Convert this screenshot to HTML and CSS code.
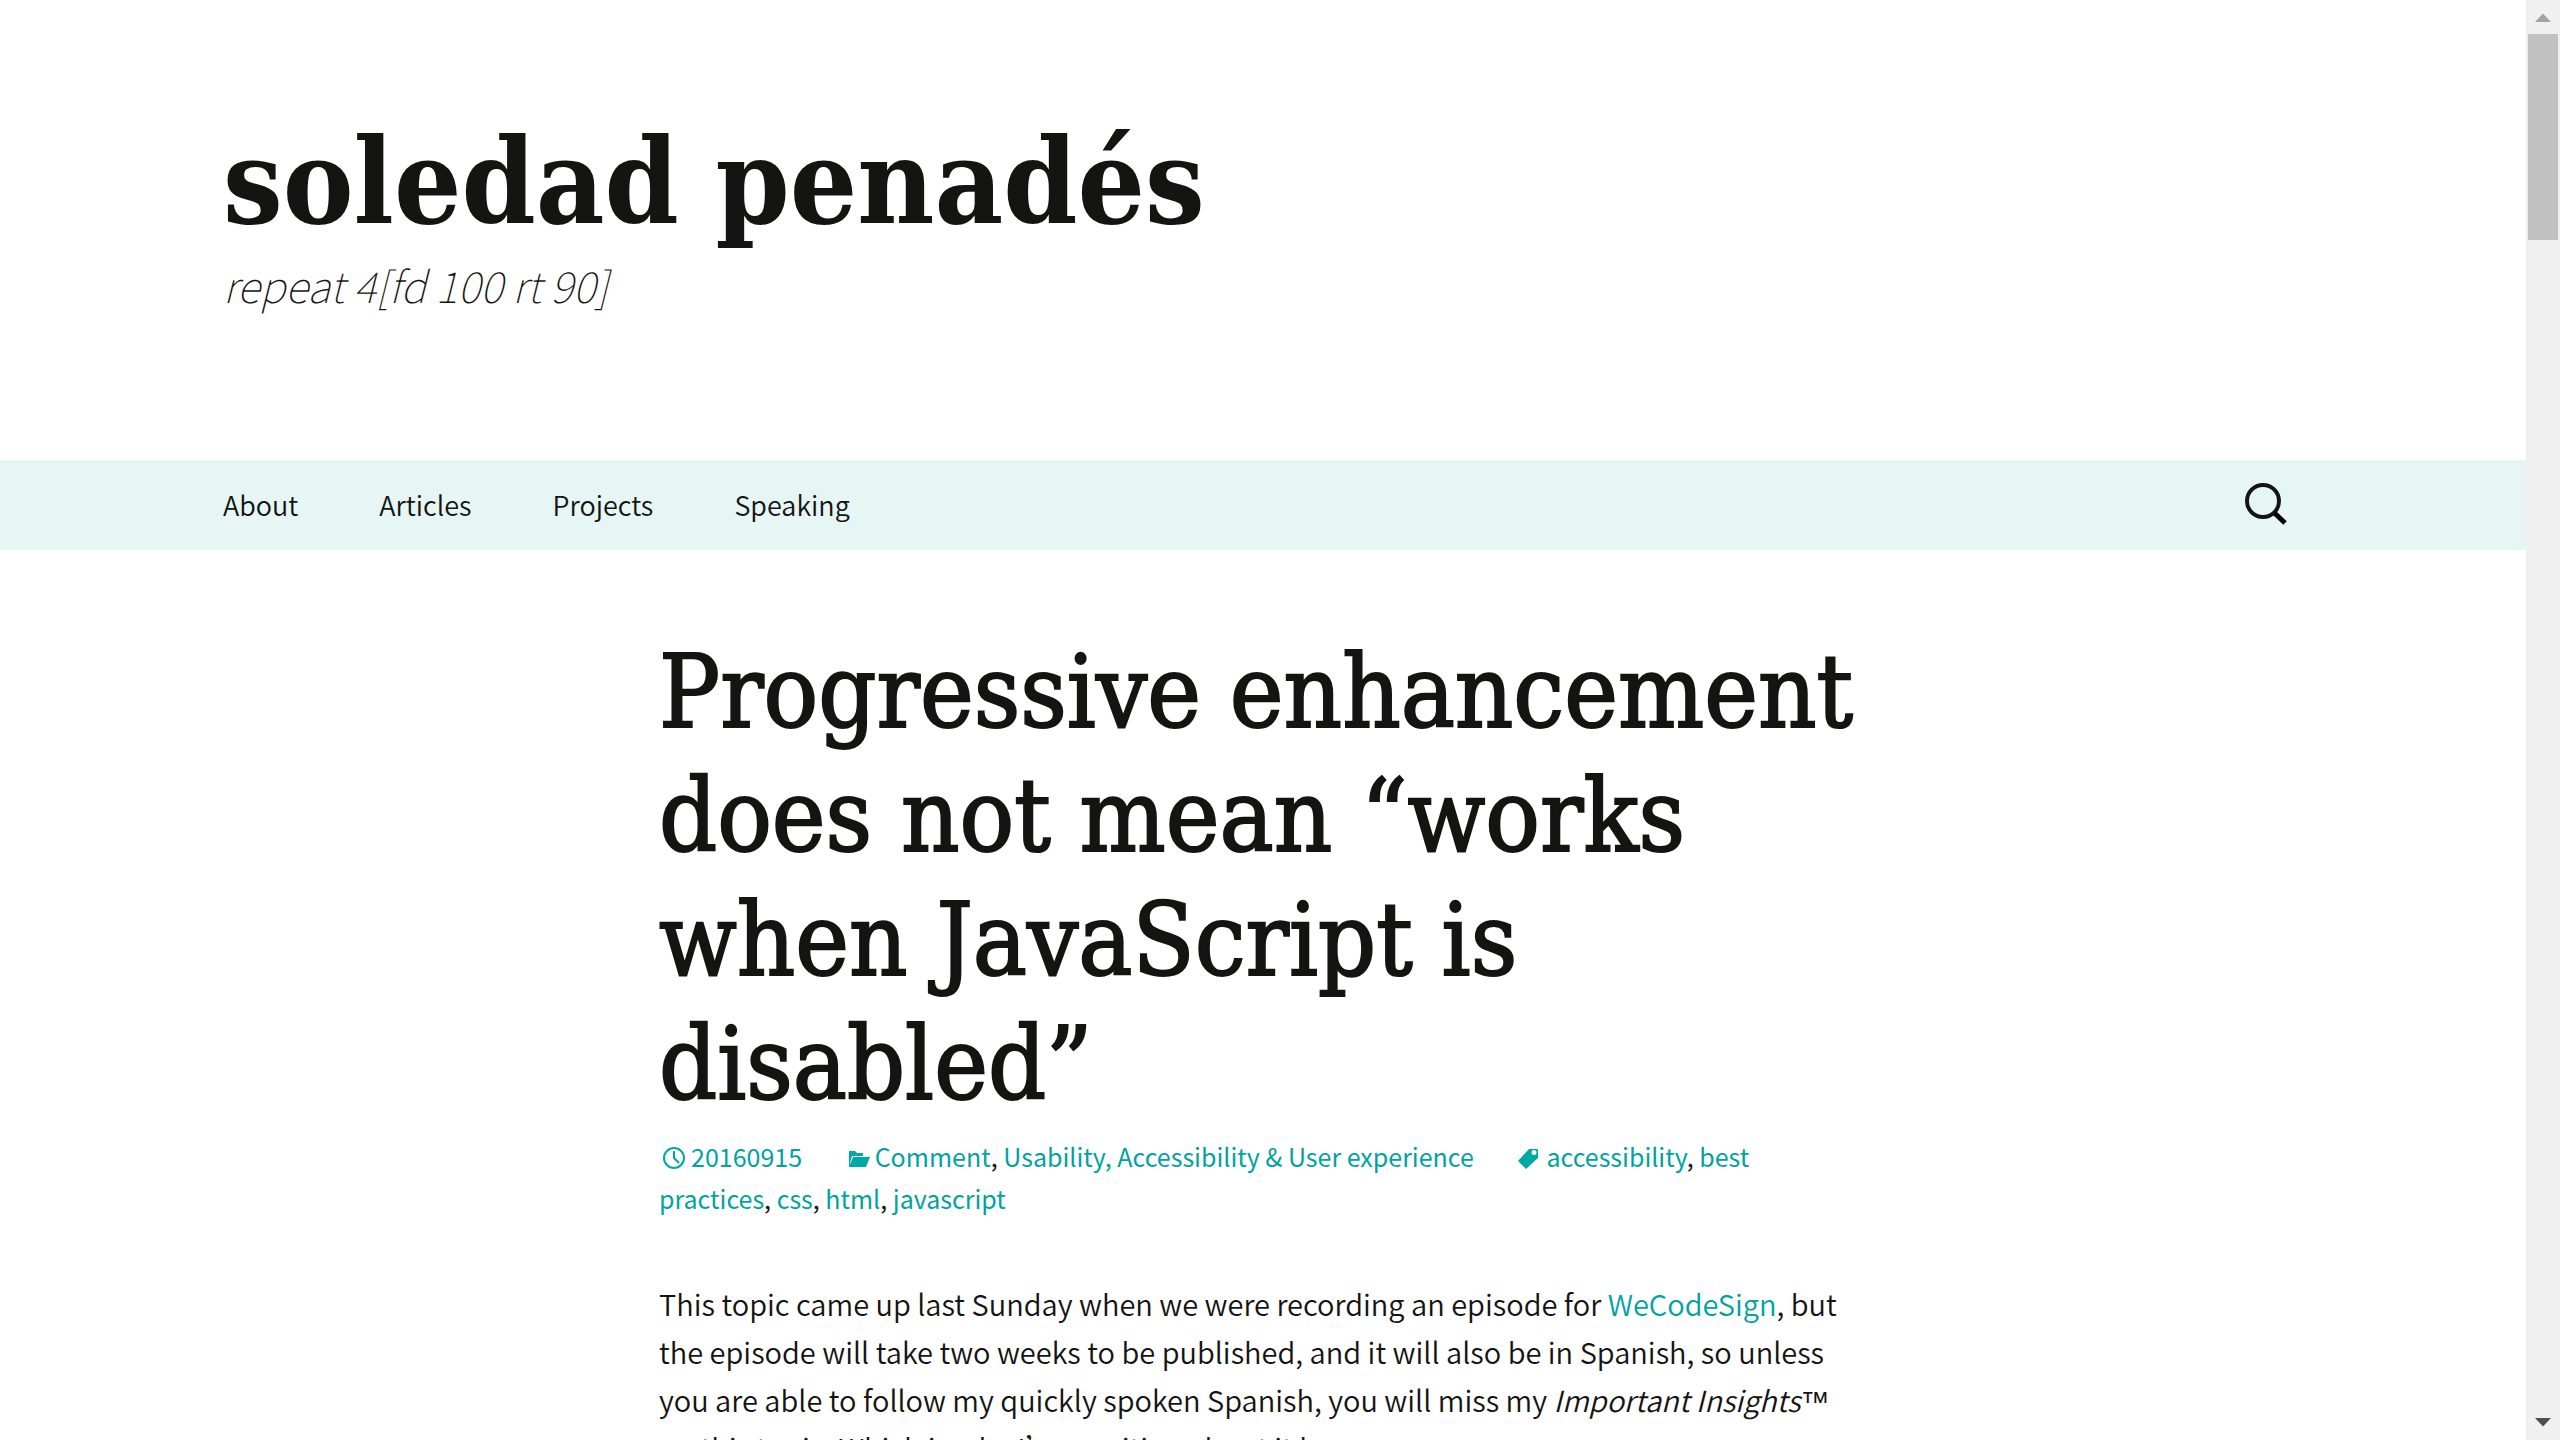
FILE: index.html
```html
<!DOCTYPE html>
<html lang="en">
<head>
<meta charset="utf-8">
<title>Progressive enhancement does not mean “works when JavaScript is disabled” | soledad penadés</title>
<link rel="stylesheet" href="styles.css">
</head>
<body>
<div class="viewport">
  <div class="page">
    <header class="site-header">
      <a class="home-link" href="#">
        <h1 class="site-title">soledad penadés</h1>
        <p class="site-description">repeat 4[fd 100 rt 90]</p>
      </a>
    </header>
    <div class="navbar">
      <nav class="main-nav">
        <ul class="menu">
          <li><a href="#">About</a></li>
          <li><a href="#">Articles</a></li>
          <li><a href="#">Projects</a></li>
          <li><a href="#">Speaking</a></li>
        </ul>
        <button class="search-toggle" type="button" aria-label="Search">
          <svg width="46" height="46" viewBox="0 0 46 46" aria-hidden="true"><circle cx="20" cy="20" r="16" fill="none" stroke="#141412" stroke-width="4"/><path d="M31.500 32 42 42" stroke="#000" stroke-width="5"/></svg>
        </button>
      </nav>
    </div>
    <main class="entry">
      <h2 class="entry-title">Progressive enhancement does not mean “works when JavaScript is disabled”</h2>
      <div class="entry-meta">
        <span class="meta-item"><svg class="meta-icon" viewBox="0 0 32 24" aria-hidden="true"><circle cx="15" cy="12" r="10" fill="none" stroke="currentColor" stroke-width="2"/><path d="M15 5v7l5 5" fill="none" stroke="currentColor" stroke-width="2"/></svg><a href="#">20160915</a></span>
        <span class="meta-item"><svg class="meta-icon" viewBox="0 0 32 24" aria-hidden="true"><path fill="currentColor" d="M6 5h6l2 2h6v3H9L7 17V20H6zM10 11H27L23 21H6z"/></svg><a href="#">Comment</a>, <a href="#">Usability, Accessibility &amp; User experience</a></span>
        <span class="meta-item"><svg class="meta-icon" viewBox="0 0 32 24" aria-hidden="true"><path fill="currentColor" fill-rule="evenodd" d="M15 3h8l1 1v8L12 23 4 15zM20 4a2.500 2.500 0 1 0 0 5a2.500 2.500 0 0 0 0-5z"/></svg><a href="#">accessibility</a>, <a href="#">best practices</a>, <a href="#">css</a>, <a href="#">html</a>, <a href="#">javascript</a></span>
      </div>
      <p class="entry-text">This topic came up last Sunday when we were recording an episode for <a href="#">WeCodeSign</a>, but the episode will take two weeks to be published, and it will also be in Spanish, so unless you are able to follow my quickly spoken Spanish, you will miss my <em>Important Insights</em><span class="tm">™</span> on this topic. Which is why I’m writing about it here.</p>
    </main>
  </div>
  <div class="scrollbar" aria-hidden="true">
    <svg class="arrow" viewBox="0 0 34 34"><path d="M9 22 17 13.500 25 22z" fill="#a3a3a3"/></svg>
    <div class="thumb"></div>
    <svg class="arrow arrow-down" viewBox="0 0 34 34"><path d="M9 12 17 20.500 25 12z" fill="#505050"/></svg>
  </div>
</div>
</body>
</html>
```
FILE: styles.css
```css
* { box-sizing: border-box; }
body {
  margin: 0;
  background: #fff;
  color: #141412;
  font-family: "Noto Sans CJK SC", "Noto Sans", sans-serif;
  font-size: 29px;
  font-weight: 350;
  line-height: 48px;
}
a { color: #00a3a0; text-decoration: none; }
h1, h2, p, ul { margin: 0; padding: 0; }

.viewport {
  display: grid;
  grid-template-columns: 1fr 34px;
  grid-template-rows: 100%;
  height: 100vh;
  overflow: hidden;
}
.page { min-width: 0; }

.site-header, .main-nav {
  max-width: 2160px;
  margin: 0 auto;
  padding: 0 40px;
}
.site-header { height: 460px; }
.home-link { display: block; padding-top: 114px; color: #141412; }
.site-title {
  font: bold 118px/136px "DejaVu Serif Condensed", "DejaVu Serif", serif;
}
.site-description {
  font-size: 43px;
  font-weight: 100;
  font-style: italic;
  line-height: 68px;
}

.navbar { background: #e6f6f5; }
.main-nav {
  display: flex;
  align-items: center;
  justify-content: space-between;
  height: 90px;
  padding-bottom: 3px;
}
.menu { display: flex; gap: 81px; list-style: none; }
.menu a { color: #141412; font-size: 27px; }
.search-toggle {
  display: flex;
  padding: 0 14px 0 0;
  border: 0;
  background: none;
}

.entry {
  max-width: 1208px;
  margin: 0 auto;
  padding-top: 80px;
}
.entry-title {
  font: normal 101px/124px "DejaVu Serif Condensed", "DejaVu Serif", serif;
  -webkit-text-stroke: 2px #141412;
}
.entry-meta {
  margin: 9px 0 60px;
  padding-right: 10px;
  font-size: 25px;
  font-weight: 400;
  line-height: 42px;
}
.meta-item { margin-right: 35px; }
.meta-icon {
  width: 32px;
  height: 24px;
  color: #00a9a6;
  vertical-align: -3px;
}
.tm {
  font-family: "Liberation Sans", sans-serif;
  line-height: 1;
}

.scrollbar {
  display: flex;
  flex-direction: column;
  background: #f0f0f0;
}
.arrow { width: 34px; height: 34px; }
.arrow-down { margin-top: auto; }
.thumb { height: 206px; margin: 0 2px; background: #c1c1c1; }
```
